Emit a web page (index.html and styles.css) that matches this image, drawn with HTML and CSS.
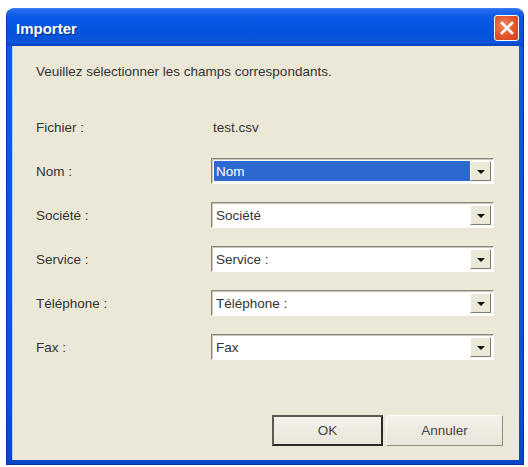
FILE: index.html
```html
<!DOCTYPE html>
<html lang="fr">
<head>
  <meta charset="UTF-8">
  <title>Importer</title>
  <link rel="stylesheet" href="styles.css">
</head>
<body>
<div class="window">
  <div class="titlebar">
    <span class="title">Importer</span>
    <button class="close-btn" aria-label="Fermer">
      <svg width="14" height="14" viewBox="0 0 14 14"><path d="M2 2 L12 12 M12 2 L2 12" stroke="#fff" stroke-width="2.6" stroke-linecap="square"/></svg>
    </button>
  </div>

  <div class="content">
    <p class="intro">Veuillez sélectionner les champs correspondants.</p>

    <div class="form">
      <div class="row">
        <span class="label">Fichier :</span>
        <span class="value">test.csv</span>
      </div>
      <div class="row">
        <span class="label">Nom :</span>
        <div class="combo selected"><span class="combo-text">Nom</span><span class="arrow"></span></div>
      </div>
      <div class="row">
        <span class="label">Société :</span>
        <div class="combo"><span class="combo-text">Société</span><span class="arrow"></span></div>
      </div>
      <div class="row">
        <span class="label">Service :</span>
        <div class="combo"><span class="combo-text">Service :</span><span class="arrow"></span></div>
      </div>
      <div class="row">
        <span class="label">Téléphone :</span>
        <div class="combo"><span class="combo-text">Téléphone :</span><span class="arrow"></span></div>
      </div>
      <div class="row">
        <span class="label">Fax :</span>
        <div class="combo"><span class="combo-text">Fax</span><span class="arrow"></span></div>
      </div>
    </div>

    <div class="buttons">
      <button class="btn btn-default">OK</button>
      <button class="btn btn-cancel">Annuler</button>
    </div>
  </div>
</div>
</body>
</html>
```

FILE: styles.css
```css
* {
  margin: 0;
  padding: 0;
  box-sizing: border-box;
}

body {
  background: #fff;
  font-family: "Liberation Sans", Arial, sans-serif;
  color: #333;
}

.window {
  margin: 8px 4px 0 6px;
  height: 457px;
  display: flex;
  flex-direction: column;
  background: linear-gradient(to bottom, #3d7ff0 0%, #0a5ce6 8%, #0852dc 85%, #0646c8 100%);
  border-radius: 8px 8px 0 0;
  border: 1px solid #0a2fa8;
  border-top-color: #3a7ef5;
}

.titlebar {
  height: 37px;
  display: flex;
  align-items: center;
  justify-content: space-between;
  padding: 0 4px 0 9px;
  background: linear-gradient(to bottom, #2a6cf0 0%, #0b5ae8 20%, #0553de 60%, #0b54d8 90%, #0842c4 100%);
  border-radius: 7px 7px 0 0;
}

.title {
  color: #fff;
  font-weight: bold;
  font-size: 15px;
  text-shadow: 1px 1px 0 #0a2a80;
  padding-top: 2px;
}

.close-btn {
  width: 25px;
  height: 26px;
  border: 1px solid #fff;
  border-radius: 3px;
  background: radial-gradient(circle at 40% 40%, #f08a60 0%, #e2552c 55%, #c8401c 100%);
  display: flex;
  align-items: center;
  justify-content: center;
  margin-top: 1px;
}

.content {
  flex: 1;
  margin: 0 4px 4px 5px;
  background: #ebe8d8;
  padding: 18px 25px 14px 23px;
  display: flex;
  flex-direction: column;
  border-left: 1px solid #b8cdf5;
}

.intro {
  font-size: 13.5px;
  line-height: 16px;
}

.form {
  margin-top: 34px;
  display: flex;
  flex-direction: column;
  gap: 18px;
}

.row {
  display: grid;
  grid-template-columns: 175px 283px;
  align-items: center;
  height: 26px;
  font-size: 13.5px;
}

.value {
  padding-left: 2px;
}

.combo {
  height: 26px;
  display: flex;
  align-items: stretch;
  background: #fff;
  border: 1px solid #fff;
  border-top-color: #8a877c;
  border-left-color: #8a877c;
  box-shadow: inset 1px 1px 0 #c9c6b8;
  padding: 2px 2px 2px 2px;
}

.combo-text {
  flex: 1;
  display: flex;
  align-items: center;
  padding-left: 2px;
  font-size: 13.5px;
  color: #333;
}

.combo.selected .combo-text {
  background: #2d68d0;
  color: #fff;
}

.arrow {
  width: 21px;
  background: #ebe8d8;
  border: 1px solid #7d7a70;
  border-top-color: #fff;
  border-left-color: #fff;
  position: relative;
}

.arrow::after {
  content: "";
  position: absolute;
  left: 6px;
  top: 8px;
  border-left: 4px solid transparent;
  border-right: 4px solid transparent;
  border-top: 4px solid #111;
}

.buttons {
  margin-top: auto;
  display: flex;
  justify-content: flex-end;
  gap: 3px;
}

.btn {
  height: 31px;
  font-family: "Liberation Sans", Arial, sans-serif;
  font-size: 13.5px;
  color: #444;
  background: linear-gradient(to bottom, #f4f2ea, #e8e5d9);
  border: 1px solid #fff;
  border-right-color: #8e8b80;
  border-bottom-color: #8e8b80;
}

.btn-default {
  width: 111px;
  border: 2px solid #2b2a26;
  border-top-color: #5c5a52;
  border-left-color: #5c5a52;
}

.btn-cancel {
  width: 117px;
  margin-right: -9px;
}
```
